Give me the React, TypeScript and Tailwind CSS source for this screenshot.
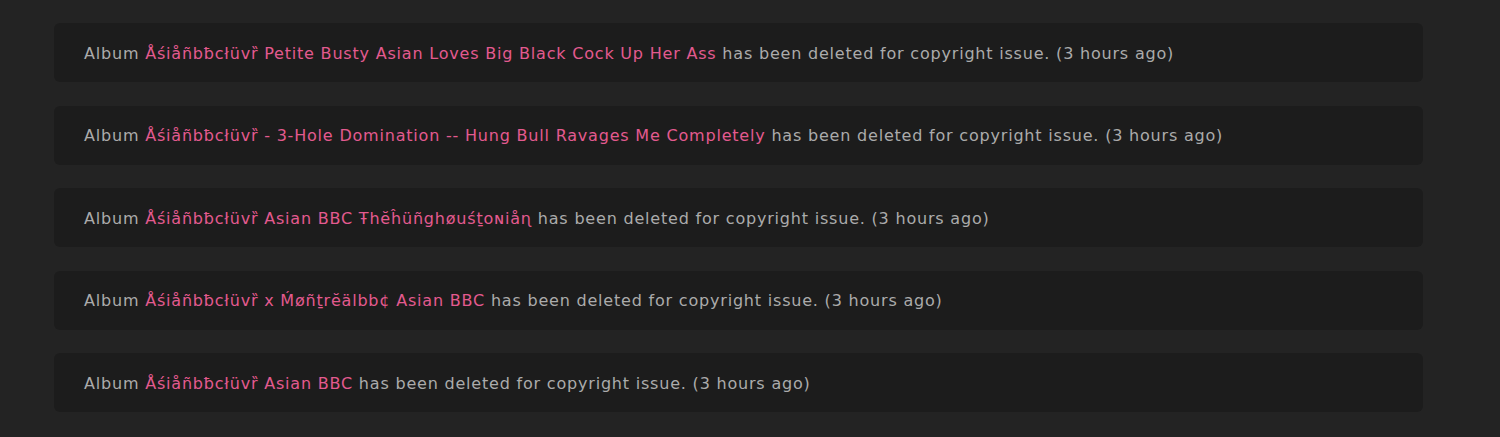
const items = [
  "Åśiåñbƀcłüvȑ Petite Busty Asian Loves Big Black Cock Up Her Ass",
  "Åśiåñbƀcłüvȑ - 3-Hole Domination -- Hung Bull Ravages Me Completely",
  "Åśiåñbƀcłüvȑ Asian BBC Ŧhĕĥüñghøuśṯoɴiåɳ",
  "Åśiåñbƀcłüvȑ x Ḿøñṯrĕälbb¢ Asian BBC",
  "Åśiåñbƀcłüvȑ Asian BBC",
];

export default function App() {
  return (
    <div
      className="min-h-[437px] w-full bg-[#232323] pt-[23px] pl-[54px] pr-[77px]"
      style={{ fontFamily: '"DejaVu Sans", sans-serif' }}
    >
      <div className="flex flex-col gap-[23.5px]">
        {items.map((title, i) => (
          <div
            key={i}
            className="flex h-[59px] items-center rounded-md bg-[#1c1c1c] pl-[30px] pt-[2px] text-[16px] tracking-[0.8px] text-[#ababab]"
          >
            <span>
              Album <span className="text-[#e35a8f]">{title}</span> has been
              deleted for copyright issue. (3 hours ago)
            </span>
          </div>
        ))}
      </div>
    </div>
  );
}
